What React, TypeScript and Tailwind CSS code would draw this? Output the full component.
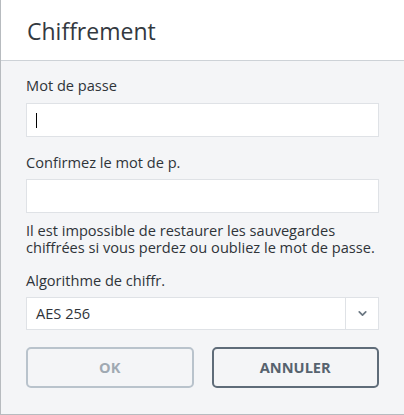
import { ChevronDown } from "lucide-react";

const font = { fontFamily: '"Open Sans", "Noto Sans", sans-serif' };

export default function App() {
  return (
    <div
      className="w-[404px] h-[415px] flex flex-col border-l border-b border-[#b7bbbf] bg-[#f4f5f7] text-[#2f3439] overflow-hidden"
      style={font}
    >
      <div className="h-[61px] shrink-0 bg-white border-b border-[#cdd2d7] flex items-center pl-[26px] pt-[2px]">
        <h1 className="text-[23px] leading-[30px] text-[#33393f]">Chiffrement</h1>
      </div>

      <div className="flex flex-col px-[25px] pt-[14px] text-[14.6px]">
        <label className="leading-[20px] mb-[8px]">Mot de passe</label>
        <div className="h-[34px] bg-white border border-[#dfe2e6] flex items-center pl-[9px]">
          <span className="w-px h-[15px] bg-black" />
        </div>

        <label className="leading-[20px] mt-[15px] mb-[7px]">Confirmez le mot de p.</label>
        <div className="h-[34px] bg-white border border-[#dfe2e6]" />

        <div className="mt-[9px] whitespace-nowrap">
          <p className="leading-[17px]">Il est impossible de restaurer les sauvegardes</p>
          <p className="leading-[17px]">chiffrées si vous perdez ou oubliez le mot de passe.</p>
        </div>

        <label className="leading-[20px] mt-[14px] mb-[7px]">Algorithme de chiffr.</label>
        <div className="h-[33px] bg-white border border-[#dfe2e6] flex items-stretch">
          <div className="flex-1 flex items-center pl-[9px]">AES 256</div>
          <div className="w-[33px] border-l border-[#dfe2e6] flex items-center justify-center">
            <ChevronDown className="w-[13px] h-[13px] text-[#6b7782]" strokeWidth={3.2} />
          </div>
        </div>

        <div className="grid grid-cols-2 gap-[18px] mt-[17px]">
          <button className="h-[41px] rounded-[5px] border-2 border-[#b9c3cc] font-bold text-[#a0a9b2]">
            OK
          </button>
          <button className="h-[41px] rounded-[5px] border-2 border-[#5f6c79] font-bold text-[#56626e]">
            ANNULER
          </button>
        </div>
      </div>
    </div>
  );
}
